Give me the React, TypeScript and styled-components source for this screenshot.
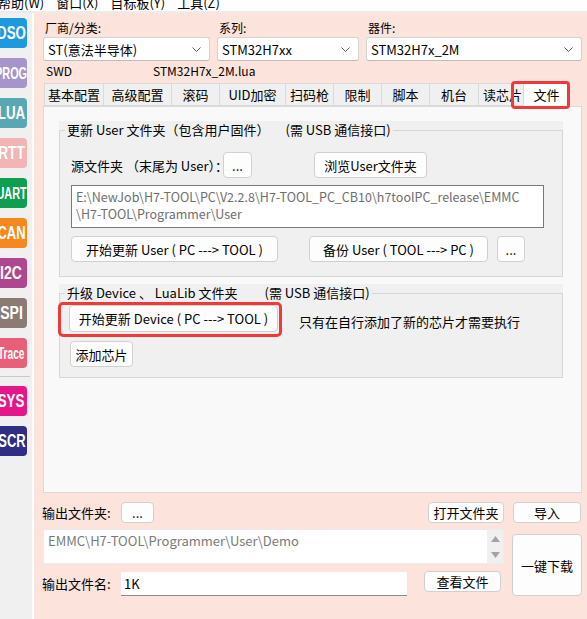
import React from 'react';
import styled, { createGlobalStyle } from 'styled-components';

const GlobalStyle = createGlobalStyle`
  html, body {
    margin: 0;
    padding: 0;
    background: #fff;
  }
  body {
    font-family: "Noto Sans CJK SC", "Noto Sans", sans-serif;
    font-size: 12px;
    color: #000;
  }
  * {
    box-sizing: border-box;
  }
`;

const Window = styled.div`
  width: 587px;
  height: 619px;
  display: flex;
  flex-direction: column;
  overflow: hidden;
  background: #fff;
`;

const MenuBar = styled.div`
  height: 13px;
  flex-shrink: 0;
  display: flex;
  gap: 12px;
  overflow: hidden;
  border-bottom: 2px solid #ececec;
`;

const MenuItem = styled.span`
  font-size: 13px;
  line-height: 13px;
  margin-top: -4px;
  white-space: nowrap;
  &:first-child {
    margin-left: -2px;
  }
`;

const Body = styled.div`
  flex: 1;
  display: flex;
  min-height: 0;
`;

const Sidebar = styled.div`
  width: 32px;
  flex-shrink: 0;
  background: #f0f0f0;
  overflow: hidden;
  padding-top: 5px;
  display: flex;
  flex-direction: column;
`;

const SideButton = styled.div<{ $bg: string }>`
  margin-left: -4px;
  width: 31px;
  height: 30px;
  flex-shrink: 0;
  margin-bottom: 10px;
  border-radius: 4px;
  background: ${(p) => p.$bg};
  color: #fff;
  display: flex;
  align-items: center;
  justify-content: center;
  overflow: hidden;
`;

const SideText = styled.span<{ $size: number; $scale: number }>`
  display: inline-block;
  font-family: "Liberation Sans", "DejaVu Sans", sans-serif;
  font-weight: 700;
  font-size: ${(p) => p.$size}px;
  line-height: 1;
  white-space: nowrap;
  transform: scaleX(${(p) => p.$scale});
`;

const SideSep = styled.div`
  height: 1px;
  flex-shrink: 0;
  background: #c9c9c9;
  margin: -2px 2px 9px 0;
`;

const Main = styled.div`
  flex: 1;
  margin-left: 2px;
  background: #fce3dc;
  padding: 7px 5px 0 9px;
  display: flex;
  flex-direction: column;
`;

const SelectGrid = styled.div`
  display: grid;
  grid-template-columns: 167px 142px 216px;
  column-gap: 7px;
`;

const Field = styled.div`
  display: flex;
  flex-direction: column;
  gap: 1px;
`;

const FieldLabel = styled.span`
  line-height: 16px;
  padding-left: 2px;
`;

const Select = styled.div`
  height: 24px;
  background: #fff;
  border: 1px solid #d4d4d4;
  border-bottom-color: #bdbdbd;
  border-radius: 3px;
  display: flex;
  align-items: center;
  justify-content: space-between;
  padding: 0 8px 0 4px;
  font-size: 13px;
`;

const InfoRow = styled.div`
  display: flex;
  margin-top: 2px;
  line-height: 16px;
  padding-left: 3px;
`;

const InfoCell = styled.span<{ $w?: number }>`
  width: ${(p) => (p.$w ? `${p.$w}px` : 'auto')};
`;

const TabBar = styled.div`
  display: flex;
  align-items: flex-end;
  height: 25px;
  margin-top: 2px;
  padding-left: 1px;
  position: relative;
  z-index: 1;
`;

const Tab = styled.div<{ $w: number; $active?: boolean }>`
  position: relative;
  width: ${(p) => p.$w}px;
  height: ${(p) => (p.$active ? 26 : 23)}px;
  margin-bottom: ${(p) => (p.$active ? -1 : 0)}px;
  margin-left: ${(p) => (p.$active ? -3 : 0)}px;
  background: ${(p) => (p.$active ? '#fff' : '#f0f0f0')};
  border: 1px solid #dadada;
  border-bottom: ${(p) => (p.$active ? 'none' : '1px solid #dadada')};
  border-right: ${(p) => (p.$active ? '1px solid #dadada' : 'none')};
  display: flex;
  align-items: center;
  justify-content: center;
  font-size: 13px;
  white-space: nowrap;
  z-index: ${(p) => (p.$active ? 2 : 1)};
`;

const TabHighlight = styled.div`
  position: absolute;
  top: -1px;
  bottom: -2px;
  left: -13px;
  right: -1px;
  border: 3px solid #f0393b;
  border-radius: 4px;
  pointer-events: none;
`;

const ContentPanel = styled.div`
  height: 387px;
  flex-shrink: 0;
  background: #f9f9f9;
  border: 1px solid #dadada;
  padding: 14px 18px 0 15px;
  display: flex;
  flex-direction: column;
  gap: 7px;
`;

const Group = styled.div`
  background: #f0f0f0;
`;

const Frame = styled.fieldset<{ $pb: number }>`
  margin: 0;
  min-inline-size: 0;
  border: 1px solid #d6d6d6;
  padding: 0 0 ${(p) => p.$pb}px 11px;
`;

const Legend = styled.legend`
  margin-left: -6px;
  padding: 0 2px;
  line-height: 18px;
  font-size: 13px;
  white-space: nowrap;
`;

const LegendNote = styled.span<{ $gap: number }>`
  margin-left: ${(p) => p.$gap}px;
`;

const Row = styled.div<{ $mt: number }>`
  display: flex;
  align-items: center;
  margin-top: ${(p) => p.$mt}px;
`;

const RowLabel = styled.span<{ $w: number }>`
  width: ${(p) => p.$w}px;
  flex-shrink: 0;
  font-size: 13px;
  white-space: nowrap;
`;

const Button = styled.div<{ $w: number; $h?: number; $ml?: number; $mt?: number }>`
  width: ${(p) => p.$w}px;
  height: ${(p) => p.$h ?? 26}px;
  margin-left: ${(p) => p.$ml ?? 0}px;
  margin-top: ${(p) => p.$mt ?? 0}px;
  flex-shrink: 0;
  background: #fdfdfd;
  border: 1px solid #d0d0d0;
  border-radius: 4px;
  display: flex;
  align-items: center;
  justify-content: center;
  font-size: 13px;
  white-space: nowrap;
  position: relative;
`;

const ButtonHighlight = styled.div`
  position: absolute;
  top: -4px;
  bottom: -6px;
  left: -12px;
  right: -5px;
  border: 3px solid #f0393b;
  border-radius: 5px;
  pointer-events: none;
`;

const PathBox = styled.div`
  margin-top: 7px;
  width: 473px;
  height: 43px;
  background: #fff;
  border: 1px solid #7a7a7a;
  padding: 2px 4px;
  color: #6f6f6f;
  font-size: 12.5px;
  line-height: 17px;
  white-space: pre;
  overflow: hidden;
`;

const Hint = styled.span`
  margin-left: 21px;
  margin-top: 5px;
  font-size: 13px;
  white-space: nowrap;
`;

const Bottom = styled.div`
  display: flex;
  gap: 8px;
  margin-top: 9px;
`;

const LeftCol = styled.div`
  width: 461px;
  display: flex;
  flex-direction: column;
`;

const RightCol = styled.div`
  width: 70px;
  display: flex;
  flex-direction: column;
`;

const BarRow = styled.div<{ $mt?: number }>`
  display: flex;
  align-items: flex-start;
  margin-top: ${(p) => p.$mt ?? 0}px;
`;

const BarLabel = styled.span<{ $w: number; $h: number }>`
  width: ${(p) => p.$w}px;
  height: ${(p) => p.$h}px;
  display: flex;
  align-items: center;
  flex-shrink: 0;
  font-size: 13px;
  margin-left: -1px;
`;

const OutputBox = styled.div`
  margin-top: 6px;
  height: 35px;
  background: #fff;
  border: 1px solid #ececec;
  display: flex;
`;

const OutputText = styled.div`
  flex: 1;
  padding: 2px 4px;
  color: #7a7a7a;
  font-size: 13px;
  line-height: 17px;
  white-space: nowrap;
  overflow: hidden;
`;

const ScrollBar = styled.div`
  width: 16px;
  background: #f0f0f0;
  display: flex;
  flex-direction: column;
  align-items: center;
  justify-content: space-between;
  padding: 6px 0 5px;
`;

const NameInput = styled.div`
  width: 286px;
  height: 24px;
  margin-top: 1px;
  background: #fff;
  border-bottom: 1px solid #8a8a8a;
  padding-left: 3px;
  display: flex;
  align-items: center;
  font-size: 13px;
`;

const Chevron = () => (
  <svg width="9" height="5" viewBox="0 0 9 5">
    <polyline points="0.5,0.5 4.5,4.5 8.5,0.5" fill="none" stroke="#555" strokeWidth="1" />
  </svg>
);

const Arrow = ({ up }: { up?: boolean }) => (
  <svg width="9" height="6" viewBox="0 0 9 6">
    <polygon points={up ? '4.5,0 9,6 0,6' : '0,0 9,0 4.5,6'} fill="#a3a3a3" />
  </svg>
);

const menus = ['帮助(W)', '窗口(X)', '目标板(Y)', '工具(Z)'];

type Side = { label: string; bg: string; size: number; scale: number };

const sideButtons: Side[] = [
  { label: 'DSO', bg: '#1b9ae0', size: 18, scale: 0.74 },
  { label: 'PROG', bg: '#a695cb', size: 17, scale: 0.64 },
  { label: 'LUA', bg: '#58a8b4', size: 18, scale: 0.74 },
  { label: 'RTT', bg: '#f2b4b5', size: 18, scale: 0.76 },
  { label: 'UART', bg: '#0f9d50', size: 17, scale: 0.64 },
  { label: 'CAN', bg: '#f5881f', size: 18, scale: 0.72 },
  { label: 'I2C', bg: '#b0468e', size: 18, scale: 0.78 },
  { label: 'SPI', bg: '#8b7b74', size: 18, scale: 0.78 },
  { label: 'Trace', bg: '#e95f78', size: 17, scale: 0.6 },
];

const sideButtons2: Side[] = [
  { label: 'SYS', bg: '#e5168a', size: 18, scale: 0.74 },
  { label: 'SCR', bg: '#2f2d84', size: 18, scale: 0.72 },
];

const tabs: { label: string; w: number }[] = [
  { label: '基本配置', w: 59 },
  { label: '高级配置', w: 68 },
  { label: '滚码', w: 48 },
  { label: 'UID加密', w: 66 },
  { label: '扫码枪', w: 48 },
  { label: '限制', w: 48 },
  { label: '脚本', w: 48 },
  { label: '机台', w: 49 },
  { label: '读芯片', w: 48 },
];

const SideItem = ({ b }: { b: Side }) => (
  <SideButton $bg={b.bg}>
    <SideText $size={b.size} $scale={b.scale}>
      {b.label}
    </SideText>
  </SideButton>
);

export default function App() {
  return (
    <Window>
      <GlobalStyle />
      <MenuBar>
        {menus.map((m) => (
          <MenuItem key={m}>{m}</MenuItem>
        ))}
      </MenuBar>
      <Body>
        <Sidebar>
          {sideButtons.map((b) => (
            <SideItem key={b.label} b={b} />
          ))}
          <SideSep />
          {sideButtons2.map((b) => (
            <SideItem key={b.label} b={b} />
          ))}
        </Sidebar>
        <Main>
          <SelectGrid>
            <Field>
              <FieldLabel>厂商/分类:</FieldLabel>
              <Select>
                ST(意法半导体)
                <Chevron />
              </Select>
            </Field>
            <Field>
              <FieldLabel>系列:</FieldLabel>
              <Select>
                STM32H7xx
                <Chevron />
              </Select>
            </Field>
            <Field>
              <FieldLabel>器件:</FieldLabel>
              <Select>
                STM32H7x_2M
                <Chevron />
              </Select>
            </Field>
          </SelectGrid>
          <InfoRow>
            <InfoCell $w={107}>SWD</InfoCell>
            <InfoCell>STM32H7x_2M.lua</InfoCell>
          </InfoRow>
          <TabBar>
            {tabs.map((t) => (
              <Tab key={t.label} $w={t.w}>
                {t.label}
              </Tab>
            ))}
            <Tab $w={47} $active>
              文件
              <TabHighlight />
            </Tab>
          </TabBar>
          <ContentPanel>
            <Group>
              <Frame $pb={14}>
                <Legend>
                  更新 User 文件夹（包含用户固件）
                  <LegendNote $gap={16}>(需 USB 通信接口)</LegendNote>
                </Legend>
                <Row $mt={13}>
                  <RowLabel $w={152}>源文件夹 （末尾为 User）：</RowLabel>
                  <Button $w={29}>...</Button>
                  <Button $w={113} $ml={62}>
                    浏览User文件夹
                  </Button>
                </Row>
                <PathBox>
                  {'E:\\NewJob\\H7-TOOL\\PC\\V2.2.8\\H7-TOOL_PC_CB10\\h7toolPC_release\\EMMC\n\\H7-TOOL\\Programmer\\User'}
                </PathBox>
                <Row $mt={8}>
                  <Button $w={207}>开始更新 User ( PC ---&gt; TOOL )</Button>
                  <Button $w={179} $ml={31}>
                    备份 User ( TOOL ---&gt; PC )
                  </Button>
                  <Button $w={28} $ml={9}>
                    ...
                  </Button>
                </Row>
              </Frame>
            </Group>
            <Group>
              <Frame $pb={10}>
                <Legend>
                  升级 Device 、 LuaLib 文件夹
                  <LegendNote $gap={27}>(需 USB 通信接口)</LegendNote>
                </Legend>
                <Row $mt={3}>
                  <Button $w={209} $h={27} $ml={-2}>
                    开始更新 Device ( PC ---&gt; TOOL )
                    <ButtonHighlight />
                  </Button>
                  <Hint>只有在自行添加了新的芯片才需要执行</Hint>
                </Row>
                <Row $mt={9}>
                  <Button $w={63} $ml={-1}>
                    添加芯片
                  </Button>
                </Row>
              </Frame>
            </Group>
          </ContentPanel>
          <Bottom>
            <LeftCol>
              <BarRow>
                <BarLabel $w={79} $h={21}>
                  输出文件夹:
                </BarLabel>
                <Button $w={33} $h={21}>
                  ...
                </Button>
                <Button $w={76} $h={21} $ml={274}>
                  打开文件夹
                </Button>
              </BarRow>
              <OutputBox>
                <OutputText>EMMC\H7-TOOL\Programmer\User\Demo</OutputText>
                <ScrollBar>
                  <Arrow up />
                  <Arrow />
                </ScrollBar>
              </OutputBox>
              <BarRow $mt={7}>
                <BarLabel $w={79} $h={25}>
                  输出文件名:
                </BarLabel>
                <NameInput>1K</NameInput>
                <Button $w={77} $h={21} $ml={17}>
                  查看文件
                </Button>
              </BarRow>
            </LeftCol>
            <RightCol>
              <Button $w={68} $h={21} $ml={1}>
                导入
              </Button>
              <Button $w={70} $h={62} $mt={11}>
                一键下载
              </Button>
            </RightCol>
          </Bottom>
        </Main>
      </Body>
    </Window>
  );
}
